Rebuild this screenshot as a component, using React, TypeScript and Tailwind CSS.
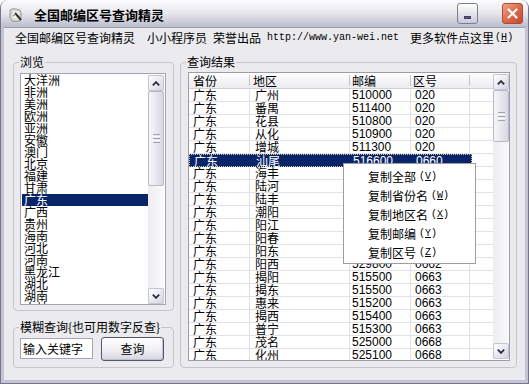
import React from "react";

const CJK = "font-['Noto_Sans_CJK_SC',sans-serif]";
const MONO = "font-['Liberation_Mono',monospace]";
const SANS = "font-['Liberation_Sans',sans-serif]";

const provinces = [
  "大洋洲", "非洲", "美洲", "欧洲", "亚洲", "安徽", "澳门", "北京", "福建", "甘肃",
  "广东", "广西", "贵州", "海南", "河北", "河南", "黑龙江", "湖北", "湖南", "吉林",
];

const rows: [string, string, string, string][] = [
  ["广东", "广州", "510000", "020"],
  ["广东", "番禺", "511400", "020"],
  ["广东", "花县", "510800", "020"],
  ["广东", "从化", "510900", "020"],
  ["广东", "增城", "511300", "020"],
  ["广东", "汕尾", "516600", "0660"],
  ["广东", "海丰", "516400", "0660"],
  ["广东", "陆河", "516700", "0660"],
  ["广东", "陆丰", "516500", "0660"],
  ["广东", "潮阳", "515100", "0754"],
  ["广东", "阳江", "529500", "0662"],
  ["广东", "阳春", "529600", "0662"],
  ["广东", "阳东", "529900", "0662"],
  ["广东", "阳西", "529800", "0662"],
  ["广东", "揭阳", "515500", "0663"],
  ["广东", "揭东", "515500", "0663"],
  ["广东", "惠来", "515200", "0663"],
  ["广东", "揭西", "515400", "0663"],
  ["广东", "普宁", "515300", "0663"],
  ["广东", "茂名", "525000", "0668"],
  ["广东", "化州", "525100", "0668"],
];

function Arrow({ up }: { up?: boolean }) {
  return (
    <div className="h-[16px] w-full shrink-0 rounded-[2px] border border-[#c4c5d3] bg-gradient-to-br from-[#ffffff] to-[#d5d6e1] flex items-center justify-center">
      <svg width="8" height="5" viewBox="0 0 8 5">
        <path
          d={up ? "M0.8 4.3 L4 1.1 L7.2 4.3" : "M0.8 0.7 L4 3.9 L7.2 0.7"}
          fill="none"
          stroke="#2c2c44"
          strokeWidth="1.8"
        />
      </svg>
    </div>
  );
}

function VScroll({ thumbTop, thumbH, className }: { thumbTop: number; thumbH: number; className?: string }) {
  return (
    <div className={`flex flex-col bg-gradient-to-r from-[#ededf1] to-[#fafafb] ${className ?? ""}`}>
      <Arrow up />
      <div className="flex-1 flex flex-col">
        <div
          className="shrink-0 rounded-[2px] border border-[#b7b8ca] bg-gradient-to-r from-[#f7f7fa] to-[#d8d8e2] flex flex-col items-center justify-center gap-[1px]"
          style={{ marginTop: thumbTop, height: thumbH }}
        >
          <div className="w-[7px] h-[1px] bg-[#a3a3b6]" />
          <div className="w-[7px] h-[1px] bg-[#ffffff]" />
          <div className="w-[7px] h-[1px] bg-[#a3a3b6]" />
          <div className="w-[7px] h-[1px] bg-[#ffffff]" />
          <div className="w-[7px] h-[1px] bg-[#a3a3b6]" />
        </div>
      </div>
      <Arrow />
    </div>
  );
}

function Group({ label, className, children }: { label: string; className?: string; children?: React.ReactNode }) {
  return (
    <div className={`relative border border-[#c5c5cf] rounded-[4px] ${className ?? ""}`}>
      <span className={`absolute left-[5px] top-[-7px] px-[1px] bg-[#ebebef] text-[12px] leading-[12px] text-black ${CJK}`}>
        {label}
      </span>
      {children}
    </div>
  );
}

function Key({ k }: { k: string }) {
  return (
    <span className={`${MONO} text-[10px] ml-[3px]`}>
      (<span className="underline">{k}</span>)
    </span>
  );
}

export default function App() {
  const cols = ["w-[61px]", "w-[100px]", "w-[61px]", "w-[59px]"];
  return (
    <div className="w-[529px] h-[384px] bg-white">
      <div className="w-[529px] h-[384px] relative flex flex-col rounded-t-[8px] overflow-hidden bg-[#c3c3d1] border-x border-b border-[#74748a]">
        {/* Title bar */}
        <div className="h-[27px] shrink-0 flex items-center pl-[7px] pr-[5px] bg-gradient-to-b from-[#fdfdfe] via-[#e6e6ed] to-[#bcbdcc]">
          <svg width="16" height="16" viewBox="0 0 16 16" className="shrink-0 mt-[2px]">
            <path d="M2 3 Q4 1 8 2 L12 3 Q14 6 13 10 L12 14 Q8 15 4 14 Q1 11 2 7 Z" fill="#d8d8d0" stroke="#8a8a80" strokeWidth="0.8" />
            <path d="M5 4 L11 5 L10 12 L5 11 Z" fill="#f4f4ec" />
            <path d="M7 6 L13 13" stroke="#303030" strokeWidth="2" />
            <path d="M5 9 L8 7" stroke="#707070" strokeWidth="1" />
          </svg>
          <span className={`ml-[10px] mt-[2px] text-[13px] leading-[14px] font-bold text-black ${CJK}`}>全国邮编区号查询精灵</span>
          <div className="flex-1" />
          <div className="w-[21px] h-[21px] rounded-[3px] border border-[#7b7c94] bg-gradient-to-b from-[#ffffff] to-[#c9cad9] flex items-end justify-center pb-[4px]">
            <div className="w-[7px] h-[3px] bg-[#5a5b78] border border-[#3f405a]" />
          </div>
          <div className="w-[24px]" />
          <div className="w-[21px] h-[21px] rounded-[3px] border border-[#b04a34] bg-gradient-to-br from-[#f0a48c] via-[#dc6a4c] to-[#c44a2e] flex items-center justify-center">
            <svg width="11" height="11" viewBox="0 0 11 11">
              <path d="M1.5 1.5 L9.5 9.5 M9.5 1.5 L1.5 9.5" stroke="#ffffff" strokeWidth="2.2" strokeLinecap="round" />
            </svg>
          </div>
        </div>

        {/* Client area */}
        <div className={`flex-1 mx-[3px] mb-[3px] bg-[#ebebef] border-t border-[#9c9cae] flex flex-col pl-[9px] pr-[8px] text-black ${CJK}`}>
          {/* Menu-like line */}
          <div className="h-[20px] shrink-0 pt-[3px] flex items-start text-[12px] leading-[13px] whitespace-nowrap">
            <span className="ml-[2px]">全国邮编区号查询精灵</span>
            <span className="ml-[12px]">小小程序员</span>
            <span className="ml-[6px]">荣誉出品</span>
            <span className={`ml-[6px] ${MONO} text-[10px] leading-[13px]`}>http://www.yan-wei.net</span>
            <span className="ml-[11px]">更多软件点这里</span>
            <span className={`${MONO} text-[10px] leading-[13px] ml-[1px]`}>
              (<span className="underline">H</span>)
            </span>
          </div>

          {/* Main */}
          <div className="mt-[14px] flex gap-[6px]">
            {/* Left column */}
            <div className="w-[161px] flex flex-col gap-[16px]">
              <Group label="浏览" className="h-[249px] pt-[10px] pl-[6px] pr-[7px]">
                <div className="h-[232px] bg-white border border-[#a3a3b3] flex">
                  <div className="flex-1 ml-[1px] overflow-hidden">
                    {provinces.map((p) => (
                      <div
                        key={p}
                        className={`h-[12px] leading-[12px] text-[12px] pl-[2px] ${p === "广东" ? "bg-[#0a246a] text-white" : ""}`}
                      >
                        {p}
                      </div>
                    ))}
                  </div>
                  <VScroll className="w-[16px] mt-[1px] mr-[1px]" thumbTop={0} thumbH={95} />
                </div>
              </Group>
              <Group label="模糊查询{也可用数字反查}" className="h-[41px] pl-[6px] pt-[2px] flex items-center">
                <div className="w-[73px] h-[21px] bg-white border border-[#a5a5b5] pl-[2px] flex items-center text-[12px] leading-[12px]">
                  输入关键字
                </div>
                <div className="ml-[8px] w-[63px] h-[24px] rounded-[3px] border border-[#56566e] bg-gradient-to-b from-[#ffffff] via-[#f2f2f6] to-[#d6d6e0] flex items-center justify-center text-[12px] leading-[12px] shadow-[inset_-1px_-1px_0_#c0c0cc]">
                  查询
                </div>
              </Group>
            </div>

            {/* Right group */}
            <Group label="查询结果" className="w-[337px] h-[306px] pt-[9px] pl-[7px] pr-[6px]">
              <div className="h-[289px] bg-white border border-[#9c9cac] flex">
                <div className="flex-1 flex flex-col overflow-hidden">
                  {/* Header */}
                  <div className="h-[16px] shrink-0 flex bg-gradient-to-b from-[#ffffff] to-[#ebebf0] border-b border-[#d0d0d8] text-[12px] leading-[14px]">
                    {["省份", "地区", "邮编", "区号"].map((h, i) => (
                      <div key={h} className={`${cols[i]} shrink-0 flex items-center justify-between`}>
                        <span className={i === 0 ? "pl-[4px]" : i === 1 ? "pl-[3px]" : "pl-[2px]"}>{h}</span>
                        <div className="w-[1px] h-[11px] bg-[#c4c4cc]" />
                      </div>
                    ))}
                    <div className="flex-1" />
                  </div>
                  {/* Rows */}
                  <div className="flex-1 overflow-hidden">
                    {rows.map((r, idx) => {
                      const sel = idx === 5;
                      return (
                        <div key={idx} className="h-[13px] flex text-[12px] leading-[12px]">
                          <div className={`flex ${sel ? "bg-[#0a246a] text-white border border-dotted border-[#d8c88a]" : ""}`}>
                            <div className={`${cols[0]} shrink-0 pl-[4px] ${sel ? "" : "border-b border-r border-[#e2e2e6]"} ${CJK}`}>{r[0]}</div>
                            <div className={`${cols[1]} shrink-0 pl-[5px] ${sel ? "" : "border-b border-r border-[#e2e2e6]"} ${CJK}`}>{r[1]}</div>
                            <div className={`${cols[2]} shrink-0 pl-[2px] ${sel ? "" : "border-b border-r border-[#e2e2e6]"} ${SANS}`}>{r[2]}</div>
                            <div className={`${cols[3]} shrink-0 pl-[4px] ${sel ? "" : "border-b border-r border-[#e2e2e6]"} ${SANS}`}>{r[3]}</div>
                          </div>
                          <div className="flex-1 border-b border-[#e2e2e6]" />
                        </div>
                      );
                    })}
                  </div>
                </div>
                <VScroll className="w-[16px] mt-[1px] mb-[1px]" thumbTop={0} thumbH={52} />
              </div>
            </Group>
          </div>
        </div>

        {/* Context menu popup */}
        <div className={`absolute left-[342px] top-[163px] w-[133px] h-[101px] bg-white border border-[#9d9da6] py-[3px] text-[12px] leading-[12px] ${CJK}`}>
          {[
            ["复制全部", "V"],
            ["复制省份名", "W"],
            ["复制地区名", "X"],
            ["复制邮编", "Y"],
            ["复制区号", "Z"],
          ].map(([t, k]) => (
            <div key={k} className="h-[19px] flex items-center pl-[24px] whitespace-nowrap">
              <span>{t}</span>
              <Key k={k} />
            </div>
          ))}
        </div>
      </div>
    </div>
  );
}
